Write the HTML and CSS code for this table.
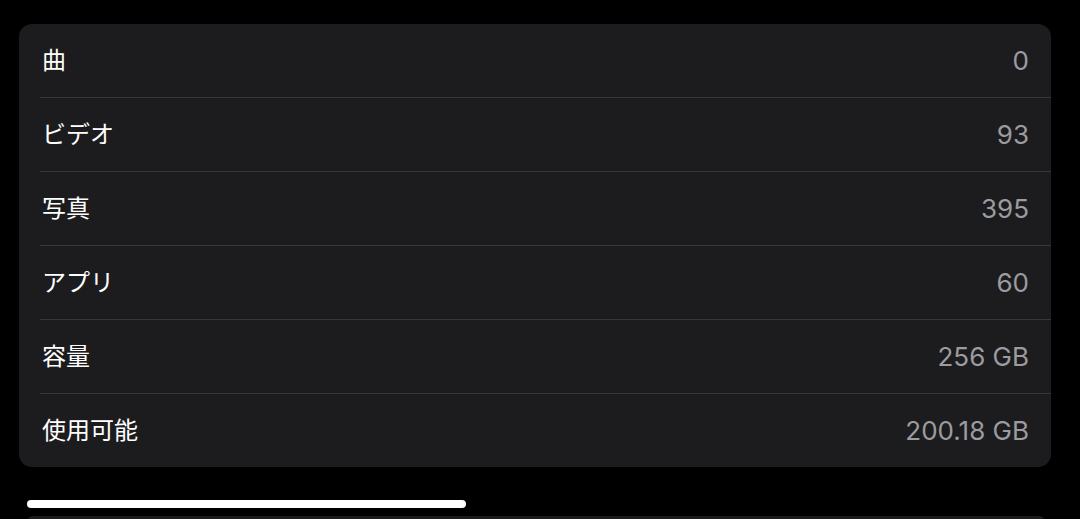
FILE: index.html
```html
<!DOCTYPE html>
<html>
<head>
	<meta charset="utf-8">
	<title>情報</title>
	<link rel="stylesheet" href="styles.css">
</head>
<body>
	<div class="card">
		<div class="row"><span class="label">曲</span><span class="value">0</span></div>
		<div class="row"><span class="label">ビデオ</span><span class="value">93</span></div>
		<div class="row"><span class="label">写真</span><span class="value">395</span></div>
		<div class="row"><span class="label">アプリ</span><span class="value">60</span></div>
		<div class="row"><span class="label">容量</span><span class="value">256 GB</span></div>
		<div class="row"><span class="label">使用可能</span><span class="value">200.18 GB</span></div>
	</div>
	<div class="home-bar"></div>
	<div class="next-card"></div>
</body>
</html>
```
FILE: styles.css
```css
html,body{margin:0;padding:0;}
body{
	background:#000;
	width:1080px;
	height:519px;
	overflow:hidden;
	padding-top:24px;
	box-sizing:border-box;
	font-family:Inter,"Noto Sans CJK JP",sans-serif;
}
.card{
	margin-left:19px;
	width:1032px;
	background:#1c1c1e;
	border-radius:13px;
	overflow:hidden;
}
.row{
	display:flex;
	justify-content:space-between;
	align-items:center;
	height:73px;
	margin-left:21px;
	padding:0 22px 0 2px;
	border-bottom:1px solid #38383a;
}
.row:last-child{border-bottom:none;}
.label{
	color:#fff;
	font-size:24px;
	line-height:1;
	padding-bottom:4px;
	font-family:"Noto Sans CJK JP",sans-serif;
}
.value{
	color:#9b9ba0;
	font-size:26px;
	line-height:1;
}
.home-bar{
	margin:33px 0 0 27px;
	width:439px;
	height:8px;
	background:#fff;
	border-radius:4px;
}
.next-card{
	margin:8px 0 0 27px;
	width:1018px;
	height:12px;
	background:#1a1a1c;
	border-radius:6px 6px 0 0;
}
```
